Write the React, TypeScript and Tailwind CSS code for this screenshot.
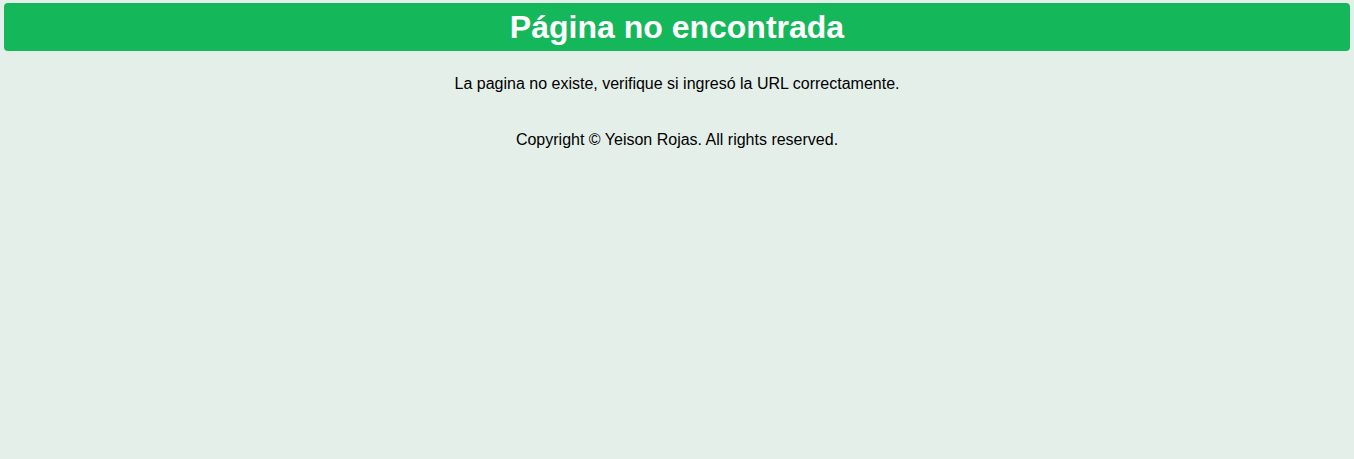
export default function App() {
  return (
    <div className="min-h-screen bg-[#e4efe9] px-[4px] pt-[3px] text-black" style={{ fontFamily: '"Liberation Sans", Arial, sans-serif' }}>
      {/* Header */}
      <header className="h-[48px] rounded-[4px] bg-[#14b85a] flex items-center justify-center">
        <h1 className="text-white font-bold text-[32px] leading-none">Página no encontrada</h1>
      </header>

      <p className="mt-[24px] text-center text-[16px] leading-[18px]">
        La pagina no existe, verifique si ingresó la URL correctamente.
      </p>

      {/* Footer */}
      <footer className="mt-[38px] text-center text-[16px] leading-[18px]">
        Copyright © Yeison Rojas. All rights reserved.
      </footer>
    </div>
  )
}
